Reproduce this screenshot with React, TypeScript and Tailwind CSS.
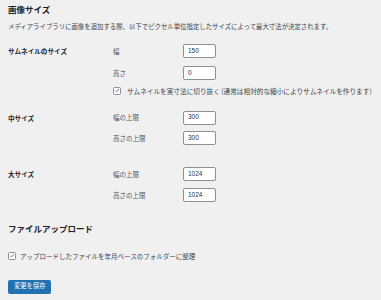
import React from "react";

const font = { fontFamily: '"Noto Sans CJK JP", "Noto Sans", sans-serif' };

function SizeInput({ value }: { value: string }) {
  return (
    <div
      className="flex h-[14px] w-[33px] items-center rounded-[2px] border border-[#8c8f94] bg-white pl-[4px] text-[6.5px] leading-none text-[#2c3338]"
      style={{ fontFamily: '"Liberation Sans", Arial, sans-serif' }}
    >
      {value}
    </div>
  );
}

function CheckBox() {
  return (
    <span className="flex h-[8px] w-[8px] shrink-0 items-center justify-center rounded-[1.5px] border border-[#8c8f94] bg-white">
      <svg viewBox="0 0 10 10" className="h-[7px] w-[7px]">
        <path d="M2 5.2 L4.1 7.3 L8.2 2.4" fill="none" stroke="#2271b1" strokeWidth="1.4" />
      </svg>
    </span>
  );
}

function Field({ label, value, className = "" }: { label: string; value: string; className?: string }) {
  return (
    <div className={"flex h-[14px] items-center " + className}>
      <span className="w-[70px] text-[6.5px] leading-none text-[#50575e]">{label}</span>
      <SizeInput value={value} />
    </div>
  );
}

export default function App() {
  return (
    <div className="h-[300px] w-full bg-[#f0f0f1] pl-[8px] pt-[4px] text-[#1d2327]" style={font}>
      <h2 className="text-[8.5px] font-bold leading-[11px]">画像サイズ</h2>
      <p className="mt-[7.5px] text-[6.4px] leading-[7px] text-[#3c434a]">
        メディアライブラリに画像を追加する際、以下でピクセル単位指定したサイズによって最大寸法が決定されます。
      </p>

      {/* thumbnail */}
      <div className="mt-[14.5px] flex">
        <div className="w-[105px] text-[6.6px] font-bold leading-[14px]">サムネイルのサイズ</div>
        <div className="flex flex-col">
          <Field label="幅" value="150" />
          <Field label="高さ" value="0" className="mt-[8px]" />
          <div className="mt-[6.5px] flex items-center gap-[6px]">
            <CheckBox />
            <span className="text-[6.65px] leading-[8px] text-[#3c434a]">
              サムネイルを実寸法に切り抜く (通常は相対的な縮小によりサムネイルを作ります)
            </span>
          </div>
        </div>
      </div>

      {/* medium */}
      <div className="mt-[16px] flex">
        <div className="w-[105px] text-[6.6px] font-bold leading-[14px]">中サイズ</div>
        <div className="flex flex-col">
          <Field label="幅の上限" value="300" />
          <Field label="高さの上限" value="300" className="mt-[6.5px]" />
        </div>
      </div>

      {/* large */}
      <div className="mt-[22px] flex">
        <div className="w-[105px] text-[6.6px] font-bold leading-[14px]">大サイズ</div>
        <div className="flex flex-col">
          <Field label="幅の上限" value="1024" />
          <Field label="高さの上限" value="1024" className="mt-[7px]" />
        </div>
      </div>

      <h2 className="mt-[21px] text-[8.5px] font-bold leading-[11px]">ファイルアップロード</h2>
      <div className="mt-[17.5px] flex items-center gap-[4px]">
        <CheckBox />
        <span className="text-[6.5px] leading-[8px] text-[#3c434a]">
          アップロードしたファイルを年月ベースのフォルダーに整理
        </span>
      </div>

      <button className="mt-[20px] flex h-[14px] items-center rounded-[2px] bg-[#2271b1] px-[6px] text-[6.3px] leading-none text-white">
        変更を保存
      </button>
    </div>
  );
}
